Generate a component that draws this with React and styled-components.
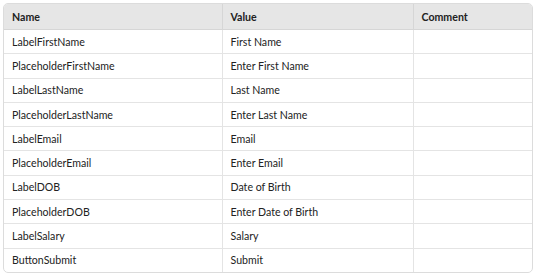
import React from 'react';
import styled, { createGlobalStyle } from 'styled-components';

const rows = [
    ['LabelFirstName', 'First Name'],
    ['PlaceholderFirstName', 'Enter First Name'],
    ['LabelLastName', 'Last Name'],
    ['PlaceholderLastName', 'Enter Last Name'],
    ['LabelEmail', 'Email'],
    ['PlaceholderEmail', 'Enter Email'],
    ['LabelDOB', 'Date of Birth'],
    ['PlaceholderDOB', 'Enter Date of Birth'],
    ['LabelSalary', 'Salary'],
    ['ButtonSubmit', 'Submit'],
];

const App = () => {
    return (
        <>
            <GlobalStyle />
            <Page>
                <TableWrap>
                    <Table>
                        <colgroup>
                            <col style={{ width: 218 }} />
                            <col style={{ width: 191 }} />
                            <col />
                        </colgroup>
                        <thead>
                            <tr>
                                <HeadCell>Name</HeadCell>
                                <HeadCell>Value</HeadCell>
                                <HeadCell>Comment</HeadCell>
                            </tr>
                        </thead>
                        <tbody>
                            {rows.map(([name, value]) => (
                                <Row key={name}>
                                    <Cell>{name}</Cell>
                                    <Cell>{value}</Cell>
                                    <Cell />
                                </Row>
                            ))}
                        </tbody>
                    </Table>
                </TableWrap>
            </Page>
        </>
    );
};

export default App;

// STYLED COMPONENTS BELOW:

const GlobalStyle = createGlobalStyle`
    body {
        margin: 0;
        background: #ffffff;
        font-family: Lato, "Noto Sans", sans-serif;
    }
`;

const Page = styled.div`
    padding: 3px 4px 0 3px;
    width: 537px;
    box-sizing: border-box;
`;

const TableWrap = styled.div`
    border: 1px solid #dcdcdc;
    border-radius: 5px;
    overflow: hidden;
`;

const Table = styled.table`
    width: 100%;
    border-collapse: collapse;
    table-layout: fixed;
    font-size: 10.6px;
    color: #222222;
`;

const HeadCell = styled.th`
    background: #e6e6e6;
    text-align: left;
    font-weight: 700;
    height: 25px;
    padding: 0 8px;
    border-left: 1px solid #d6d6d6;
    border-bottom: 1px solid #d6d6d6;
    &:first-child {
        border-left: none;
    }
`;

const Row = styled.tr`
    &:last-child td {
        border-bottom: none;
    }
`;

const Cell = styled.td`
    height: 23.3px;
    padding: 0 8px;
    border-left: 1px solid #e4e4e4;
    border-bottom: 1px solid #e4e4e4;
    &:first-child {
        border-left: none;
    }
`;
